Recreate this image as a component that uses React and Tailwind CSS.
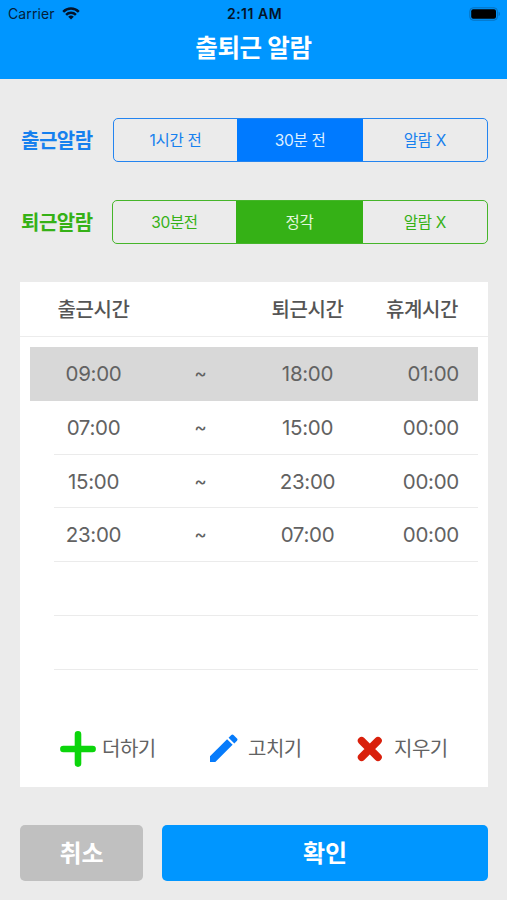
import React, { useState } from 'react';

const shifts = [
  { start: '09:00', end: '18:00', rest: '01:00' },
  { start: '07:00', end: '15:00', rest: '00:00' },
  { start: '15:00', end: '23:00', rest: '00:00' },
  { start: '23:00', end: '07:00', rest: '00:00' },
];

const StatusBar = () => (
  <div className="flex h-[27px] items-center justify-between pl-[8px] pr-[6px] text-[14px] text-[#04203a]">
    <div className="flex flex-1 items-center gap-[7px]">
      <span className="tracking-[0.1px]">Carrier</span>
      <svg width="18" height="13" viewBox="0 0 18 13" fill="none" stroke="#04142a" strokeWidth="2.5">
        <path d="M1.2 4.8a11 11 0 0 1 15.6 0" />
        <path d="M4.1 7.8a7 7 0 0 1 9.8 0" />
        <path d="M9 12.6 6.2 9.8a4 4 0 0 1 5.6 0z" fill="#04142a" stroke="none" />
      </svg>
    </div>
    <span className="font-semibold tracking-[0.5px] text-[#04142a]">2:11 AM</span>
    <div className="flex flex-1 justify-end">
      <svg width="32" height="14" viewBox="0 0 32 14">
        <rect x="0.8" y="0.8" width="27.6" height="12.4" rx="3.4" fill="none" stroke="#0670bd" />
        <rect x="2.2" y="2.3" width="24.8" height="9.4" rx="2" fill="#000" />
        <path d="M29.6 4.8c1.7.6 1.7 3.8 0 4.4z" fill="#0670bd" />
      </svg>
    </div>
  </div>
);

const AlarmRow = ({ label, options, value, onChange, theme }) => {
  const green = theme === 'green';
  return (
    <div className={`flex h-[44px] items-center justify-between ${green ? 'text-[#35b116]' : 'text-[#1680ee]'}`}>
      <span className="pt-px pl-px text-[20px] font-bold tracking-[-0.5px]">{label}</span>
      <div
        className={`grid h-full overflow-hidden rounded-[5px] border ${
          green
            ? 'w-[376px] grid-cols-[123px_127px_1fr] border-[#45b52a]'
            : 'w-[375px] grid-cols-[123px_126px_1fr] border-[#2484f0]'
        }`}
      >
        {options.map((option, index) => (
          <button
            key={option}
            onClick={() => onChange(index)}
            className={`flex items-center justify-center pt-px text-[15.5px] tracking-[-0.3px] ${
              value === index ? (green ? 'bg-[#35b116] text-[#e3f7de]' : 'bg-[#007aff] text-[#deefff]') : ''
            }`}
          >
            {option}
          </button>
        ))}
      </div>
    </div>
  );
};

const ShiftRow = ({ shift, selected, onClick }) => (
  <div onClick={onClick} className={`h-[53.75px] pl-[24px] ${selected ? 'bg-[#d8d8d8]' : ''}`}>
    <div
      className={`grid h-full grid-cols-[79px_135px_79px_1fr] items-center border-b pt-[2px] pr-[19px] text-center text-[20.5px] tracking-[-0.3px] text-[#626262] ${
        selected ? 'border-transparent' : 'border-[#ebebeb]'
      }`}
    >
      {shift && (
        <>
          <span>{shift.start}</span>
          <span className="text-[19px]">~</span>
          <span>{shift.end}</span>
          <span className="text-right">{shift.rest}</span>
        </>
      )}
    </div>
  </div>
);

const App = () => {
  const [startAlarm, setStartAlarm] = useState(1);
  const [endAlarm, setEndAlarm] = useState(1);
  const [selected, setSelected] = useState(0);

  const rows = [...shifts, null, null];

  return (
    <div className="h-[900px] w-[507px] overflow-hidden bg-[#ebebeb] font-[Inter,'Noto_Sans_CJK_KR',sans-serif]">
      {/* Header */}
      <header className="h-[79px] bg-[#0096ff]">
        <StatusBar />
        <h1 className="text-center text-[24.5px] leading-[43px] font-bold tracking-[-0.3px] text-white">출퇴근 알람</h1>
      </header>

      {/* Alarm settings */}
      <div className="flex flex-col gap-[38px] pt-[39px] pr-[19px] pl-[20px]">
        <AlarmRow
          label="출근알람"
          options={['1시간 전', '30분 전', '알람 X']}
          value={startAlarm}
          onChange={setStartAlarm}
          theme="blue"
        />
        <AlarmRow
          label="퇴근알람"
          options={['30분전', '정각', '알람 X']}
          value={endAlarm}
          onChange={setEndAlarm}
          theme="green"
        />
      </div>

      {/* Shift list */}
      <div className="mt-[38px] mr-[19px] ml-[20px] flex h-[505px] flex-col bg-white">
        <div className="grid h-[55px] grid-cols-[79px_135px_79px_1fr] items-center border-b border-[#ececec] pt-[2px] pr-[30px] pl-[34px] text-[20px] font-medium tracking-[-0.4px] whitespace-nowrap text-[#555]">
          <span className="text-center">출근시간</span>
          <span />
          <span className="text-center">퇴근시간</span>
          <span className="text-right">휴계시간</span>
        </div>
        <div className="px-[10px] pt-[10px]">
          {rows.map((shift, index) => (
            <ShiftRow key={index} shift={shift} selected={selected === index} onClick={() => setSelected(index)} />
          ))}
        </div>

        {/* Actions */}
        <div className="mt-auto flex h-[77px] items-center pl-[40px] text-[20px] tracking-[-0.5px] text-[#626262]">
          <button className="flex w-[149px] items-center gap-[6px]">
            <svg width="36" height="36" viewBox="0 0 36 36" stroke="#0bd50b" strokeWidth="6.6" strokeLinecap="round">
              <path d="M18 3.4v29.2M3.4 18h29.2" />
            </svg>
            <span className="pt-px">더하기</span>
          </button>
          <button className="flex w-[147px] items-center gap-[10px]">
            <svg width="29" height="29" viewBox="0 0 29 29" fill="#067bfb">
              <path d="M1 22.3 18.1 5.2 23.6 10.7 6.3 28H1z" />
              <path d="M19.6 3.7 22.3 1a1.6 1.6 0 0 1 2.2 0l3.5 3.5a1.6 1.6 0 0 1 0 2.2L25.3 9.4z" />
            </svg>
            <span className="pt-px">고치기</span>
          </button>
          <button className="flex items-center gap-[11px]">
            <svg width="27" height="26" viewBox="0 0 27 26" stroke="#d9200c" strokeWidth="7.6" strokeLinecap="round">
              <path d="M5.6 4.8l16.4 16.4M22 4.8L5.6 21.2" />
            </svg>
            <span className="pt-px">지우기</span>
          </button>
        </div>
      </div>

      {/* Footer buttons */}
      <div className="mt-[38px] mr-[19px] ml-[20px] flex h-[56px] gap-[19px] text-[24px] font-bold text-white">
        <button className="w-[123px] rounded-[5px] bg-[#c0c0c0] pt-[2px]">취소</button>
        <button className="flex-1 rounded-[5px] bg-[#0096ff] pt-[2px]">확인</button>
      </div>
    </div>
  );
};

export default App;
